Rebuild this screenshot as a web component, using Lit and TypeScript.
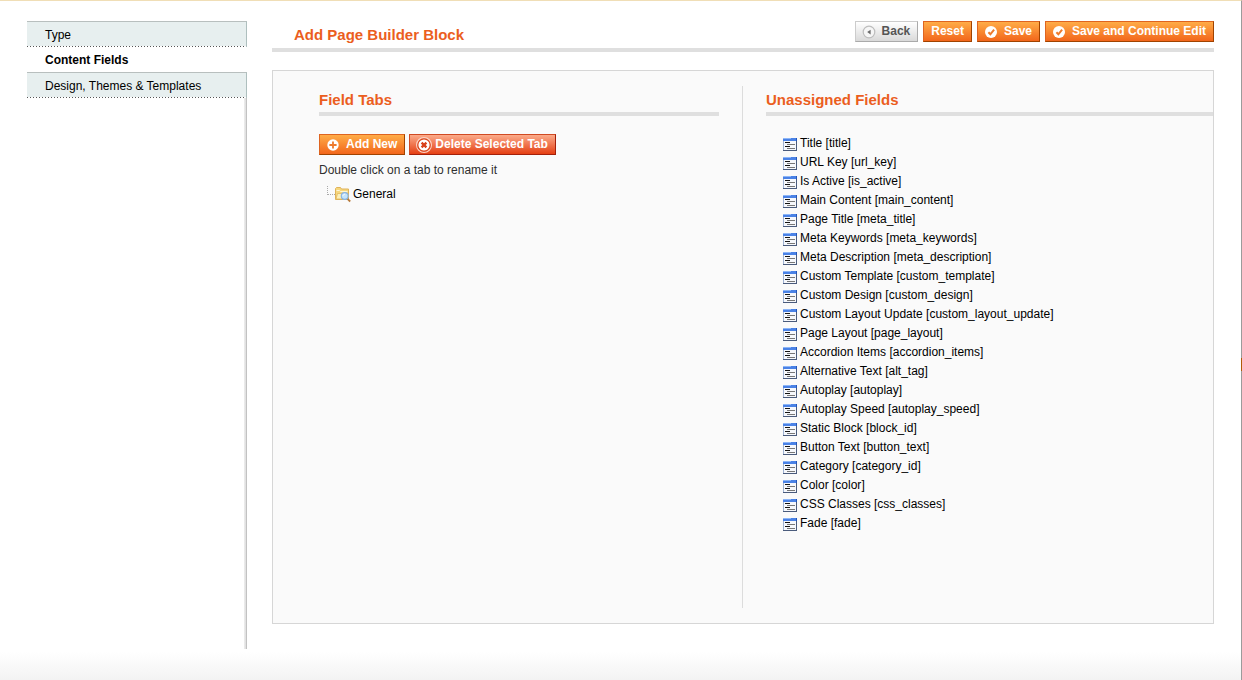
import { LitElement, html, svg, css } from "lit";
import { customElement, state } from "lit/decorators.js";

const SECTIONS = ["Type", "Content Fields", "Design, Themes & Templates"];

const FIELDS: [string, string][] = [
  ["Title", "title"],
  ["URL Key", "url_key"],
  ["Is Active", "is_active"],
  ["Main Content", "main_content"],
  ["Page Title", "meta_title"],
  ["Meta Keywords", "meta_keywords"],
  ["Meta Description", "meta_description"],
  ["Custom Template", "custom_template"],
  ["Custom Design", "custom_design"],
  ["Custom Layout Update", "custom_layout_update"],
  ["Page Layout", "page_layout"],
  ["Accordion Items", "accordion_items"],
  ["Alternative Text", "alt_tag"],
  ["Autoplay", "autoplay"],
  ["Autoplay Speed", "autoplay_speed"],
  ["Static Block", "block_id"],
  ["Button Text", "button_text"],
  ["Category", "category_id"],
  ["Color", "color"],
  ["CSS Classes", "css_classes"],
  ["Fade", "fade"],
];

const glyphs: Record<string, unknown> = {
  back: svg`<circle cx="7" cy="7" r="5.8" fill="#f6f6f6" stroke="#bdbdbd" stroke-width="1.2"/><path d="M8.6 4.8v4.6L5.2 7.1z" fill="#6a6a6a"/>`,
  check: svg`<circle cx="7" cy="7" r="6" fill="#fff"/><path d="M4.4 7.2l2 2.1 3.7-4.6" fill="none" stroke="#ee7a2c" stroke-width="2"/>`,
  plus: svg`<circle cx="7" cy="7" r="5.7" fill="#fff"/><path d="M7 3.4v7.2M3.4 7h7.2" stroke="#ee7a2c" stroke-width="1.8"/>`,
  cross: svg`<circle cx="7" cy="7" r="6.5" fill="none" stroke="#fbd3c5" stroke-width="1"/><circle cx="7" cy="7" r="5.4" fill="#fff" stroke="#d9481f" stroke-width="1"/><path d="M4.9 4.9l4.2 4.2M9.1 4.9l-4.2 4.2" stroke="#d8401a" stroke-width="2"/>`,
};

@customElement("admin-button")
export class AdminButton extends LitElement {
  static properties = { icon: {}, tone: {} };
  declare icon?: string;
  declare tone?: string;

  static styles = css`
    :host {
      display: block;
    }
    .button {
      display: flex;
      align-items: center;
      height: 21px;
      padding: 0 7px 1px;
      border: 1px solid;
      border-color: #de6420 #a04300 #a04300 #de6420;
      border-radius: 0;
      background: linear-gradient(#ffac47, #f2661b);
      color: #fff;
      font: bold 12px/18px "Liberation Sans", Arial, sans-serif;
      white-space: nowrap;
      cursor: pointer;
    }
    .back {
      border-color: #ccc #aaa #aaa #ccc;
      background: linear-gradient(#fff, #d9d9d9);
      color: #555;
    }
    .delete {
      border-color: #d04a23 #a3200a #a3200a #d04a23;
      background: linear-gradient(#fbab8a, #e53f13);
    }
    .icon {
      width: 14px;
      height: 14px;
      margin: 1px 6px 0 -1px;
    }
    .delete .icon {
      width: 16px;
      height: 16px;
      margin-right: 3px;
    }
  `;

  render() {
    return html`<button type="button" class="button ${this.tone ?? ""}">
      ${this.icon
        ? html`<svg class="icon" viewBox="0 0 14 14" aria-hidden="true">${glyphs[this.icon]}</svg>`
        : null}
      <slot></slot>
    </button>`;
  }
}

@customElement("app-root")
export class AppRoot extends LitElement {
  @state() private active = 1;

  static styles = css`
    :host {
      box-sizing: border-box;
      position: relative;
      display: flex;
      gap: 25px;
      min-height: 100vh;
      padding: 20px 27px 31px;
      border-top: 1px solid #f0deb6;
      border-right: 1px solid #9b9b9b;
      background: linear-gradient(to top, #f3f3f3, #fff 28px);
      color: #000;
      font: 12px/18px "Liberation Sans", Arial, sans-serif;
    }
    .edge-mark {
      position: absolute;
      top: 357px;
      right: -1px;
      width: 1px;
      height: 13px;
      background: #b05a08;
    }
    .sidebar {
      flex: 0 0 220px;
      background: linear-gradient(to right, #eee, #ddd 2px, #c2c2c2 2px) right / 3px 100% no-repeat;
    }
    .link {
      display: block;
      height: 25px;
      padding-left: 18px;
      border-top: 1px solid #b8bfbe;
      border-right: 1px solid #aebfbe;
      background:
        repeating-linear-gradient(to right, #555 0 1px, #fff 1px 3px) bottom / 100% 1px no-repeat,
        #e7efef;
      color: #000;
      line-height: 26px;
      text-decoration: none;
    }
    .link.active {
      border: 0;
      background: #fff;
      font-weight: bold;
    }
    .main {
      display: flex;
      flex: 1;
      flex-direction: column;
      min-width: 0;
      padding-bottom: 25px;
    }
    .header {
      display: flex;
      justify-content: space-between;
      align-items: flex-start;
      padding-left: 22px;
      border-bottom: 4px solid #dfdfdf;
    }
    h1,
    h2 {
      margin: 0;
      color: #eb5e1e;
      font-size: 15px;
    }
    h1 {
      line-height: 27px;
    }
    h2 {
      padding: 4px 0 2px;
      border-bottom: 4px solid #dfdfdf;
      line-height: 20px;
    }
    .actions {
      display: flex;
      gap: 5px;
    }
    .panel {
      display: grid;
      flex: 1;
      grid-template-columns: 1fr 1fr;
      margin-top: 18px;
      padding: 15px 0;
      border: 1px solid #d6d6d6;
      background: #fafafa;
    }
    .tabs {
      padding: 0 23px 0 46px;
      border-right: 1px solid #dcdcdc;
    }
    .unassigned {
      padding-left: 23px;
    }
    .tools {
      display: flex;
      gap: 4px;
      margin-top: 18px;
    }
    .hint {
      margin: 6px 0;
      color: #2f2f2f;
    }
    .tree,
    .fields {
      margin: 0;
      padding: 0;
      list-style: none;
    }
    .node {
      display: flex;
      gap: 2px;
      padding-left: 8px;
    }
    .folder {
      width: 24px;
      height: 18px;
    }
    .fields {
      margin-top: 18px;
      padding-left: 17px;
    }
    .field {
      display: flex;
      align-items: flex-start;
      gap: 3px;
      line-height: 19px;
    }
    .form {
      width: 14px;
      height: 13px;
      margin-top: 4px;
    }
  `;

  private formIcon() {
    return html`<svg class="form" viewBox="0 0 14 13" aria-hidden="true" shape-rendering="crispEdges">
      <path fill="#9fb2d2" d="M0 0h14v13H0z" />
      <path fill="#f6f8fc" d="M1 3h12v9H1z" />
      <path fill="#4a82e6" d="M0 0h14v3H0z" />
      <path fill="#8db6f7" d="M0 0h8v1H0z" />
      <path fill="#2456b8" d="M13 0h1v3h-1z" />
      <path fill="#4a5b7c" d="M13 3h1v10h-1zM0 12h14v1H0z" />
      <path fill="#111" d="M2 4h5v1H2zM2 8h5v1H2z" />
      <path fill="#777" d="M4 6h8v1H4zM4 10h8v1H4z" />
    </svg>`;
  }

  private folderIcon() {
    return html`<svg class="folder" viewBox="0 0 24 18" aria-hidden="true">
      <path d="M.5 1v9M1 9.500h7" fill="none" stroke="#aaa" stroke-dasharray="1 1" />
      <path d="M8.500 14.500v-11l1-1h4l1 1.500h7v10.500z" fill="#f6d77e" stroke="#e0b359" />
      <path d="M9.500 5.500h3l1 1h7" fill="none" stroke="#fff6d2" />
      <path d="M9 14l1.500-5.500h10.500v5.500z" fill="#fdf0b8" stroke="#e3b95c" stroke-width=".8" />
      <path d="M20 13.300l3.200 3.200" stroke="#b87b3c" stroke-width="1.800" />
      <circle cx="17.700" cy="11" r="3.400" fill="#c4e4fb" stroke="#8ab4e0" stroke-width="1.200" />
      <path d="M16 10.800c.2-1 .9-1.500 1.800-1.500" fill="none" stroke="#fff" />
    </svg>`;
  }

  render() {
    return html`
      <nav class="sidebar" aria-label="Block information">
        ${SECTIONS.map(
          (name, i) => html`<a
            href="#"
            class="link ${i === this.active ? "active" : ""}"
            @click=${(e: Event) => {
              e.preventDefault();
              this.active = i;
            }}
            >${name}</a
          >`
        )}
      </nav>
      <main class="main">
        <header class="header">
          <h1>Add Page Builder Block</h1>
          <div class="actions">
            <admin-button icon="back" tone="back">Back</admin-button>
            <admin-button>Reset</admin-button>
            <admin-button icon="check">Save</admin-button>
            <admin-button icon="check">Save and Continue Edit</admin-button>
          </div>
        </header>
        <div class="panel">
          <section class="tabs">
            <h2>Field Tabs</h2>
            <div class="tools">
              <admin-button icon="plus">Add New</admin-button>
              <admin-button icon="cross" tone="delete">Delete Selected Tab</admin-button>
            </div>
            <p class="hint">Double click on a tab to rename it</p>
            <ul class="tree">
              <li class="node">${this.folderIcon()}<span>General</span></li>
            </ul>
          </section>
          <section class="unassigned">
            <h2>Unassigned Fields</h2>
            <ul class="fields">
              ${FIELDS.map(
                ([label, code]) => html`<li class="field">
                  ${this.formIcon()}<span>${label} [${code}]</span>
                </li>`
              )}
            </ul>
          </section>
        </div>
      </main>
      <span class="edge-mark"></span>
    `;
  }
}
